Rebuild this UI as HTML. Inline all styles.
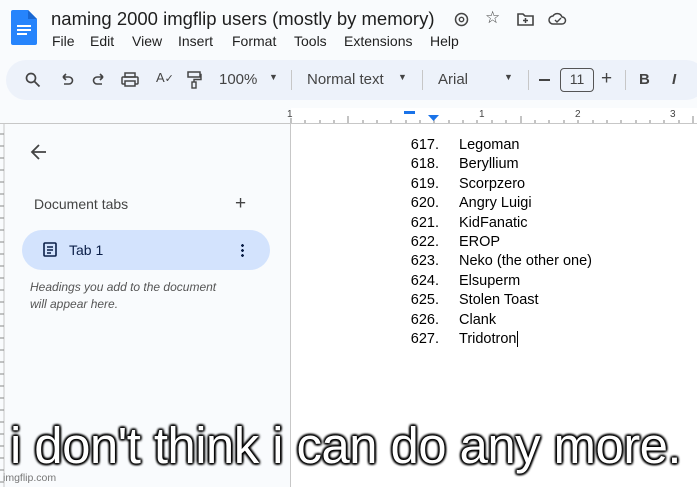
<!DOCTYPE html>
<html><head><style>
*{margin:0;padding:0;box-sizing:border-box}
body{width:697px;height:487px;overflow:hidden;position:relative;background:#f9fbfd;font-family:"Liberation Sans",Arial,sans-serif;color:#1f1f1f}
.a{position:absolute}
.menu span{position:absolute;top:0}
.tb{left:6px;top:60px;width:700px;height:40px;background:#edf2fa;border-radius:20px}
.sep{position:absolute;top:70px;width:1px;height:20px;background:#c7c7c7}
.list div{height:19.4px;font-size:14.5px;line-height:19.4px;color:#000}
.list .n{display:inline-block;width:30px;text-align:right;margin-right:20px}
.meme{left:10px;top:416px;font-size:51px;letter-spacing:-0.6px;color:#fff;white-space:nowrap;text-shadow:0 0 3px #000,0 0 3px #000,0 0 3px #000,1px 1px 2px #000,-1px -1px 2px #000,1px -1px 2px #000,-1px 1px 2px #000}
</style></head><body>
<svg class="a" style="left:11px;top:10px" width="26" height="35" viewBox="0 0 26 35"><path d="M2 0h15l9 9v24a2 2 0 0 1-2 2H2a2 2 0 0 1-2-2V2a2 2 0 0 1 2-2z" fill="#2684fc"/><path d="M17 0v9h9z" fill="#1967d2"/><rect x="6" y="15" width="14" height="2" fill="#fff"/><rect x="6" y="19" width="14" height="2" fill="#fff"/><rect x="6" y="23" width="10" height="2" fill="#fff"/></svg>
<div class="a" style="left:51px;top:8px;font-size:18.5px;color:#1f1f1f">naming 2000 imgflip users (mostly by memory)</div>
<svg class="a" style="left:454px;top:12px" width="15" height="15"><circle cx="7.5" cy="7.5" r="6" fill="none" stroke="#444" stroke-width="1.5"/><circle cx="7.5" cy="7.5" r="2.2" fill="none" stroke="#444" stroke-width="1.4"/></svg>
<div class="a" style="left:485px;top:8px;font-size:17px;color:#444">☆</div>
<svg class="a" style="left:517px;top:12px" width="17" height="14"><path d="M1 2h5l2 2h8v9H1z" fill="none" stroke="#444" stroke-width="1.6"/><path d="M8.5 6v5M6 8.5h5" stroke="#444" stroke-width="1.5"/></svg>
<svg class="a" style="left:548px;top:12px" width="20" height="14"><path d="M5 12a4 4 0 0 1 0-8 5 5 0 0 1 9 1 3.5 3.5 0 0 1 0 7z" fill="none" stroke="#444" stroke-width="1.5"/><path d="M7 8l2 2 4-4" fill="none" stroke="#444" stroke-width="1.4"/></svg>
<div class="a menu" style="left:0;top:33px;font-size:14px;color:#1f1f1f;white-space:nowrap"><span style="left:52px">File</span><span style="left:90px">Edit</span><span style="left:132px">View</span><span style="left:178px">Insert</span><span style="left:232px">Format</span><span style="left:294px">Tools</span><span style="left:344px">Extensions</span><span style="left:430px">Help</span></div>
<div class="a tb"></div>
<svg class="a" style="left:25px;top:72px" width="16" height="16"><circle cx="6" cy="6" r="4.5" fill="none" stroke="#444" stroke-width="1.7"/><path d="M9.5 9.5l5 5" stroke="#444" stroke-width="1.8"/></svg>
<svg class="a" style="left:59px;top:73px" width="16" height="14"><path d="M4 4h6a3.5 3.5 0 0 1 0 7H5M4 4l3-3M4 4l3 3" fill="none" stroke="#444" stroke-width="1.6"/></svg>
<svg class="a" style="left:91px;top:73px" width="16" height="14"><path d="M12 4H6a3.5 3.5 0 0 0 0 7h5M12 4L9 1M12 4L9 7" fill="none" stroke="#444" stroke-width="1.6"/></svg>
<svg class="a" style="left:121px;top:72px" width="18" height="16"><rect x="4" y="1" width="10" height="4" fill="none" stroke="#444" stroke-width="1.5"/><rect x="1" y="5" width="16" height="7" rx="1" fill="none" stroke="#444" stroke-width="1.5"/><rect x="4" y="9" width="10" height="5" fill="#edf2fa" stroke="#444" stroke-width="1.5"/></svg>
<div class="a" style="left:156px;top:70px;font-size:13px;color:#444">A<span style="font-size:11px">✓</span></div>
<svg class="a" style="left:186px;top:71px" width="16" height="18"><rect x="2" y="1" width="12" height="5" fill="none" stroke="#444" stroke-width="1.5"/><path d="M14 3.5h1v5H8v3" fill="none" stroke="#444" stroke-width="1.4"/><rect x="6" y="11" width="4" height="6" fill="none" stroke="#444" stroke-width="1.4"/></svg>
<div class="a" style="left:219px;top:71px;font-size:15px;color:#444">100%</div>
<div class="a" style="left:269px;top:72px;font-size:9px;color:#444">▼</div>
<div class="sep" style="left:291px"></div>
<div class="a" style="left:307px;top:71px;font-size:15px;color:#444">Normal text</div>
<div class="a" style="left:398px;top:72px;font-size:9px;color:#444">▼</div>
<div class="sep" style="left:422px"></div>
<div class="a" style="left:438px;top:71px;font-size:15px;color:#444">Arial</div>
<div class="a" style="left:504px;top:72px;font-size:9px;color:#444">▼</div>
<div class="sep" style="left:528px"></div>
<div class="a" style="left:539px;top:79px;width:11px;height:2px;background:#444"></div>
<div class="a" style="left:560px;top:68px;width:34px;height:24px;border:1.3px solid #555;border-radius:4px;font-size:14px;text-align:center;line-height:21px;color:#444">11</div>
<div class="a" style="left:601px;top:68px;font-size:19px;color:#444">+</div>
<div class="sep" style="left:625px"></div>
<div class="a" style="left:639px;top:71px;font-size:15px;font-weight:bold;color:#444">B</div>
<div class="a" style="left:672px;top:71px;font-size:15px;font-style:italic;font-weight:bold;color:#444">I</div>
<div class="a" style="left:0;top:108px;width:697px;height:16px;background:#f9fbfd"></div>
<div class="a" style="left:291px;top:108px;width:406px;height:16px;background:#fff"></div>
<svg class="a" style="left:0;top:108px" width="697" height="16">
<g stroke="#888" stroke-width="1">
<path d="M291 10v6M305 12v4M320 12v4M334 12v4M348 8v8M363 12v4M377 12v4M391 12v4M406 12v4M420 12v4M434 12v4M449 12v4M463 12v4M477 12v4M492 12v4M506 12v4M521 8v8M535 12v4M549 12v4M564 12v4M578 12v4M593 12v4M607 12v4M621 12v4M636 12v4M650 12v4M664 12v4M679 12v4M693 8v8"/>
</g><path d="M0 15.5h697" stroke="#c7c7c7"/>
<rect x="404" y="3" width="11" height="3" fill="#1a73e8"/><path d="M428 7h11l-5.5 6z" fill="#1a73e8"/>
<text x="287" y="9" font-size="10" fill="#444" font-family="Liberation Sans">1</text>
<text x="479" y="9" font-size="10" fill="#444" font-family="Liberation Sans">1</text>
<text x="575" y="9" font-size="10" fill="#444" font-family="Liberation Sans">2</text>
<text x="670" y="9" font-size="10" fill="#444" font-family="Liberation Sans">3</text>
</svg>
<svg class="a" style="left:0;top:124px" width="8" height="363"><path d="M4 0v363" stroke="#c7c7c7"/><g stroke="#888"><path d="M0 10h4M0 22h4M0 34h4M0 46h4M0 58h4M0 70h4M0 82h4M0 94h4M0 106h4M0 118h4M0 130h4M0 142h4M0 154h4M0 166h4M0 178h4M0 190h4M0 202h4M0 214h4M0 226h4M0 238h4M0 250h4M0 262h4M0 274h4M0 286h4M0 298h4M0 310h4M0 322h4M0 334h4M0 346h4M0 358h4"/></g></svg>
<div class="a" style="left:290px;top:124px;width:1px;height:363px;background:#c7c7c7"></div>
<div class="a" style="left:291px;top:124px;width:406px;height:363px;background:#fff"></div>
<svg class="a" style="left:30px;top:143px" width="18" height="18"><path d="M16 9H3M9 2L2 9l7 7" fill="none" stroke="#444" stroke-width="1.8"/></svg>
<div class="a" style="left:34px;top:196px;font-size:14px;color:#444">Document tabs</div>
<div class="a" style="left:235px;top:193px;font-size:19px;color:#444">+</div>
<div class="a" style="left:22px;top:230px;width:248px;height:40px;background:#d3e3fd;border-radius:20px"></div>
<svg class="a" style="left:43px;top:242px" width="14" height="15"><rect x="1" y="1" width="12" height="13" rx="1" fill="none" stroke="#0b1f48" stroke-width="1.6"/><path d="M4 5h6M4 8h6M4 11h4" stroke="#0b1f48" stroke-width="1.4"/></svg>
<div class="a" style="left:69px;top:242px;font-size:14px;color:#0b1f48">Tab 1</div>
<div class="a" style="left:241px;top:243px;width:3px;height:14px;background:radial-gradient(circle,#0b1f48 1.3px,transparent 1.5px) 0 0/3px 5px"></div>
<div class="a" style="left:30px;top:279px;font-size:12px;font-style:italic;color:#555;line-height:17px">Headings you add to the document<br>will appear here.</div>
<div class="a list" style="left:409px;top:136px">
<div><span class="n">617.</span>Legoman</div>
<div><span class="n">618.</span>Beryllium</div>
<div><span class="n">619.</span>Scorpzero</div>
<div><span class="n">620.</span>Angry Luigi</div>
<div><span class="n">621.</span>KidFanatic</div>
<div><span class="n">622.</span>EROP</div>
<div><span class="n">623.</span>Neko (the other one)</div>
<div><span class="n">624.</span>Elsuperm</div>
<div><span class="n">625.</span>Stolen Toast</div>
<div><span class="n">626.</span>Clank</div>
<div><span class="n">627.</span>Tridotron<span style="border-left:1px solid #000;margin-left:1px"></span></div>
</div>
<div class="a meme">i don't think i can do any more.</div>
<div class="a" style="left:3px;top:472px;font-size:10.5px;color:#777">imgflip.com</div>
</body></html>
